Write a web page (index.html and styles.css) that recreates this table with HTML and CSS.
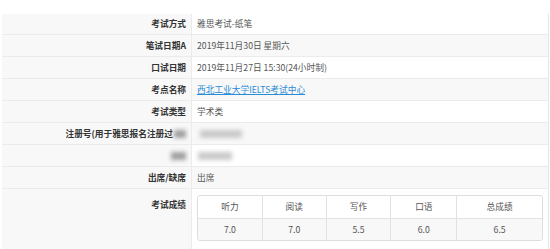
FILE: index.html
```html
<!DOCTYPE html>
<html lang="zh-CN">
<head>
<meta charset="utf-8">
<link rel="stylesheet" href="styles.css">
</head>
<body>
<div class="page">
  <table class="detail">
    <tbody>
      <tr><th>考试方式</th><td>雅思考试-纸笔</td></tr>
      <tr><th>笔试日期A</th><td>2019年11月30日 星期六</td></tr>
      <tr><th>口试日期</th><td>2019年11月27日 15:30(24小时制)</td></tr>
      <tr><th>考点名称</th><td><a class="link" href="#">西北工业大学IELTS考试中心</a></td></tr>
      <tr><th>考试类型</th><td>学术类</td></tr>
      <tr class="redact-row"><th><span class="trunc">注册号(用于雅思报名注册过</span><span class="blob dark b1"></span></th><td><span class="blob light b2"></span></td></tr>
      <tr class="redact-row"><th><span class="blob dark b3"></span></th><td><span class="blob light b4"></span></td></tr>
      <tr><th>出席/缺席</th><td>出席</td></tr>
      <tr class="score-row"><th>考试成绩</th><td>
        <table class="scores">
          <thead>
            <tr><th class="c1">听力</th><th class="c2">阅读</th><th class="c3">写作</th><th class="c4">口语</th><th class="c5">总成绩</th></tr>
          </thead>
          <tbody>
            <tr><td>7.0</td><td>7.0</td><td>5.5</td><td>6.0</td><td>6.5</td></tr>
          </tbody>
        </table>
      </td></tr>
    </tbody>
  </table>
</div>
</body>
</html>
```
FILE: styles.css
```css
html, body {
  margin: 0;
  padding: 0;
  background: #fff;
}
body {
  font-family: "Noto Sans CJK SC", "Noto Sans", sans-serif;
  font-size: 8.7px;
  color: #555;
}
.page {
  padding: 14px 1px 0 2px;
}
.detail {
  width: 547px;
  border-collapse: collapse;
  border-right: 1px solid #e6e6e6;
}
.detail > tbody > tr > th,
.detail > tbody > tr > td {
  height: 21px;
  padding: 0 5px;
  border-bottom: 1px solid #ebebeb;
  vertical-align: middle;
  line-height: 12px;
}
.detail > tbody > tr > th {
  width: 180px;
  background: #f8f8f8;
  text-align: right;
  font-weight: bold;
  color: #333;
  border-right: 1px solid #ebebeb;
  white-space: nowrap;
}
.detail > tbody > tr:nth-child(even) > td {
  background: #f8f8f8;
}
.detail > tbody > tr:first-child > th,
.detail > tbody > tr:first-child > td {
  height: 20px;
}
.link {
  color: #2a8bd6;
  text-decoration: underline;
}
.trunc {
  margin-right: 1px;
}
.blob {
  display: inline-block;
  vertical-align: middle;
  filter: blur(2px);
}
.blob.dark {
  background: #a0a0a0;
}
.blob.light {
  background: #cacaca;
}
.b1 { width: 12px; height: 8px; }
.b2 { width: 42px; height: 8px; margin-left: 3px; }
.b3 { width: 15px; height: 8px; }
.b4 { width: 34px; height: 8px; margin-left: 1px; }
.score-row > th {
  vertical-align: top !important;
  padding-top: 10px !important;
}
.score-row > td {
  padding: 6px 5px 8px 5px !important;
  border-bottom: none !important;
}
.scores {
  width: 346px;
  border-collapse: separate;
  border-spacing: 0;
  border: 1px solid #dedede;
  border-radius: 3px;
  text-align: center;
  color: #555;
}
.scores th,
.scores td {
  font-weight: normal;
  padding: 0;
  border-right: 1px solid #e2e2e2;
  line-height: 12px;
}
.scores th {
  height: 22px;
  border-bottom: 1px solid #e2e2e2;
}
.scores td {
  height: 21px;
  background: #f8f8f8;
}
.scores th:last-child,
.scores td:last-child {
  border-right: none;
}
.scores tbody tr:last-child td:first-child { border-bottom-left-radius: 3px; }
.scores tbody tr:last-child td:last-child { border-bottom-right-radius: 3px; }
.c1 { width: 64px; }
.c2 { width: 63px; }
.c3 { width: 64px; }
.c4 { width: 65px; }
.c5 { width: 85px; }
```
